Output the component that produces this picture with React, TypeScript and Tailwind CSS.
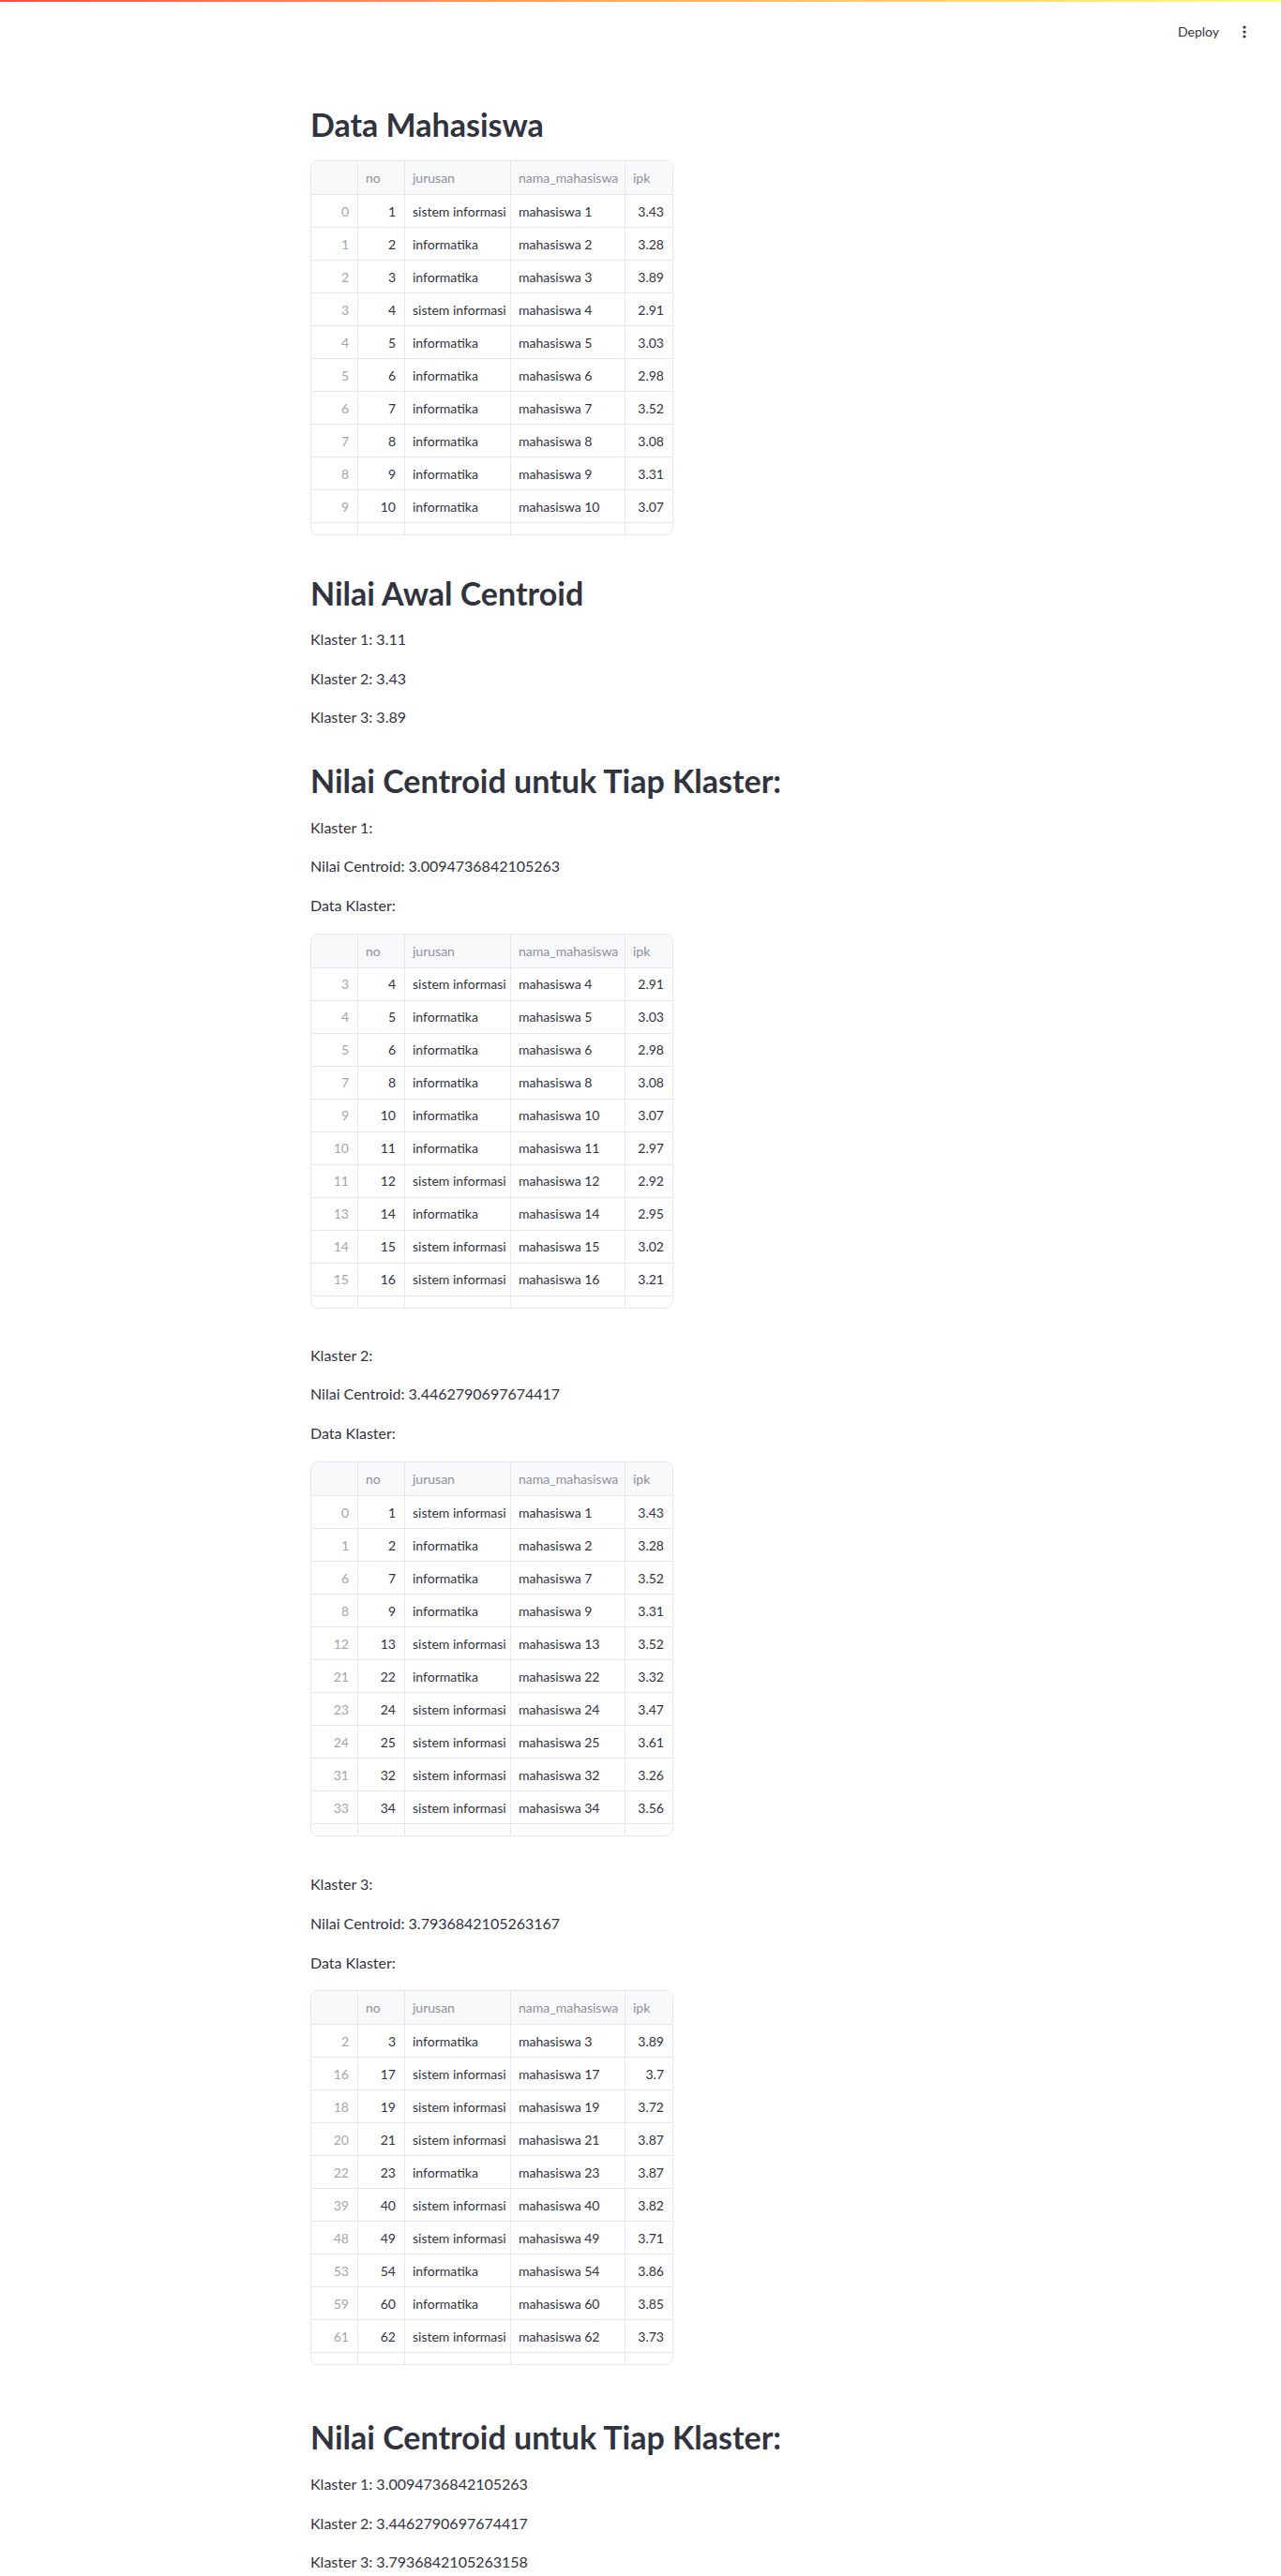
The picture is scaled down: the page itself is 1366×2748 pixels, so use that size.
import React from 'react'

type Row = [number, number, string] // [index, jurusan (0 = informatika, 1 = sistem informasi), ipk]

const JURUSAN = ['informatika', 'sistem informasi']

const dataMahasiswa: Row[] = [
  [0, 1, '3.43'],
  [1, 0, '3.28'],
  [2, 0, '3.89'],
  [3, 1, '2.91'],
  [4, 0, '3.03'],
  [5, 0, '2.98'],
  [6, 0, '3.52'],
  [7, 0, '3.08'],
  [8, 0, '3.31'],
  [9, 0, '3.07'],
]

const klaster1: Row[] = [
  [3, 1, '2.91'],
  [4, 0, '3.03'],
  [5, 0, '2.98'],
  [7, 0, '3.08'],
  [9, 0, '3.07'],
  [10, 0, '2.97'],
  [11, 1, '2.92'],
  [13, 0, '2.95'],
  [14, 1, '3.02'],
  [15, 1, '3.21'],
]

const klaster2: Row[] = [
  [0, 1, '3.43'],
  [1, 0, '3.28'],
  [6, 0, '3.52'],
  [8, 0, '3.31'],
  [12, 1, '3.52'],
  [21, 0, '3.32'],
  [23, 1, '3.47'],
  [24, 1, '3.61'],
  [31, 1, '3.26'],
  [33, 1, '3.56'],
]

const klaster3: Row[] = [
  [2, 0, '3.89'],
  [16, 1, '3.7'],
  [18, 1, '3.72'],
  [20, 1, '3.87'],
  [22, 0, '3.87'],
  [39, 1, '3.82'],
  [48, 1, '3.71'],
  [53, 0, '3.86'],
  [59, 0, '3.85'],
  [61, 1, '3.73'],
]

const grid = 'grid grid-cols-[50px_50px_113px_122px_50px]'
const cell = 'flex items-center border-r border-[#e6e7eb] px-2'

function DataFrame({ rows }: { rows: Row[] }) {
  return (
    <div className="flex h-[400px] w-[387px] flex-col overflow-hidden rounded-lg border border-[#e6e7eb] text-[14px]">
      {/* header */}
      <div className={`${grid} h-[36px] shrink-0 border-b border-[#e6e7eb] bg-[#f8f9fb] text-[#8e9099]`}>
        <div className={cell}></div>
        <div className={cell}>no</div>
        <div className={cell}>jurusan</div>
        <div className={cell}>nama_mahasiswa</div>
        <div className="flex items-center px-2">ipk</div>
      </div>
      {rows.map(([idx, jur, ipk]) => (
        <div key={idx} className={`${grid} h-[35px] shrink-0 border-b border-[#e6e7eb] text-[#31333f]`}>
          <div className={`${cell} justify-end pr-[9px] text-[#a2a5ae]`}>{idx}</div>
          <div className={`${cell} justify-end pr-[9px]`}>{idx + 1}</div>
          <div className={`${cell} whitespace-nowrap overflow-hidden`}>{JURUSAN[jur]}</div>
          <div className={`${cell} whitespace-nowrap`}>mahasiswa {idx + 1}</div>
          <div className="flex items-center justify-end pr-[9px]">{ipk}</div>
        </div>
      ))}
      {/* partially visible next row */}
      <div className={`${grid} flex-1`}>
        <div className={cell}></div>
        <div className={cell}></div>
        <div className={cell}></div>
        <div className={cell}></div>
        <div></div>
      </div>
    </div>
  )
}

function Heading({ children, className = '' }: { children: React.ReactNode; className?: string }) {
  return (
    <h2 className={`text-[34px] font-bold leading-[44px] text-[#31333f] ${className}`}>{children}</h2>
  )
}

function P({ children, className = 'mt-4' }: { children: React.ReactNode; className?: string }) {
  return <p className={`text-[16px] leading-[25.6px] text-[#31333f] ${className}`}>{children}</p>
}

export default function App() {
  return (
    <div className="h-[2748px] overflow-hidden bg-white font-['Lato',sans-serif] text-[#31333f]">
      {/* top decoration + toolbar */}
      <div className="h-[2px] bg-gradient-to-r from-[#ff4b4b] to-[#fffd80]" />
      <div className="flex h-[58px] items-start justify-end gap-[19px] pr-[31px] pt-[24px]">
        <span className="text-[14px] leading-[16px] text-[#31333f]">Deploy</span>
        <svg width="16" height="16" viewBox="0 0 16 16" className="text-[#31333f]">
          <circle cx="8" cy="3" r="1.6" fill="currentColor" />
          <circle cx="8" cy="8" r="1.6" fill="currentColor" />
          <circle cx="8" cy="13" r="1.6" fill="currentColor" />
        </svg>
      </div>

      <main className="mx-auto flex w-[704px] flex-col">
        <Heading className="mt-[51px]">Data Mahasiswa</Heading>
        <div className="mt-[16px]">
          <DataFrame rows={dataMahasiswa} />
        </div>

        <Heading className="mt-[40px]">Nilai Awal Centroid</Heading>
        <P className="mt-[14px]">Klaster 1: 3.11</P>
        <P>Klaster 2: 3.43</P>
        <P>Klaster 3: 3.89</P>

        <Heading className="mt-[33px]">Nilai Centroid untuk Tiap Klaster:</Heading>
        <P className="mt-[15px]">Klaster 1:</P>
        <P>Nilai Centroid: 3.0094736842105263</P>
        <P>Data Klaster:</P>
        <div className="mt-[17px]">
          <DataFrame rows={klaster1} />
        </div>

        <P className="mt-[37px]">Klaster 2:</P>
        <P>Nilai Centroid: 3.4462790697674417</P>
        <P>Data Klaster:</P>
        <div className="mt-[18px]">
          <DataFrame rows={klaster2} />
        </div>

        <P className="mt-[38px]">Klaster 3:</P>
        <P>Nilai Centroid: 3.7936842105263167</P>
        <P>Data Klaster:</P>
        <div className="mt-[17px]">
          <DataFrame rows={klaster3} />
        </div>

        <Heading className="mt-[55px]">Nilai Centroid untuk Tiap Klaster:</Heading>
        <P className="mt-[15px]">Klaster 1: 3.0094736842105263</P>
        <P>Klaster 2: 3.4462790697674417</P>
        <P>Klaster 3: 3.7936842105263158</P>
      </main>
    </div>
  )
}
